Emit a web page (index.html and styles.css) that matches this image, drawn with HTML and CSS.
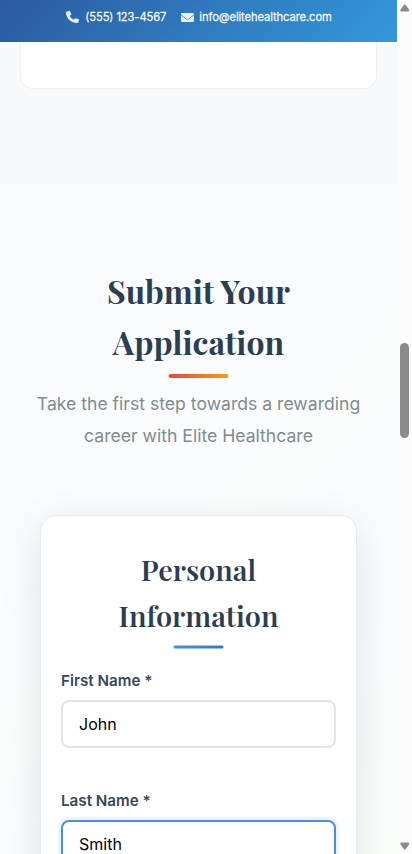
FILE: index.html
```html
<!DOCTYPE html>
<html lang="en">
<head>
<meta charset="utf-8">
<meta name="viewport" content="width=device-width, initial-scale=1">
<title>Elite Healthcare – Careers</title>
<link rel="stylesheet" href="styles.css">
</head>
<body>
<div class="window">
  <div class="page">
    <header class="topbar">
      <span class="contact phone">
        <svg viewBox="0 0 512 512" width="13" height="12" preserveAspectRatio="none"><path fill="currentColor" d="M164.900 24.600c-7.700-18.600-28-28.500-47.400-23.200l-88 24C12.100 30.200 0 46 0 64c0 247.400 200.600 448 448 448 18 0 33.800-12.100 38.600-29.500l24-88c5.300-19.400-4.600-39.700-23.200-47.400l-96-40c-16.300-6.800-35.200-2.100-46.300 11.600L304.700 368C234.300 334.700 177.300 277.700 144 207.300L193.300 167c13.700-11.200 18.400-30 11.600-46.300l-40-96z"/></svg>
        <span>(555) 123-4567</span>
      </span>
      <span class="contact mail">
        <svg viewBox="0 0 13 9" width="13" height="9"><path fill="currentColor" d="M1 0H12Q13 0 13 1V1.500L7.300 5.900Q6.500 6.500 5.700 5.900L0 1.500V1Q0 0 1 0ZM0 2.200L5.400 6.400Q6.500 7.200 7.600 6.400L13 2.200V8Q13 9 12 9H1Q0 9 0 8Z"/></svg>
        <span>info@elitehealthcare.com</span>
      </span>
    </header>
    <section class="previous"><div class="previous-card"></div></section>
    <main class="apply">
      <h2>Submit Your Application</h2>
      <p class="lead">Take the first step towards a rewarding career with Elite Healthcare</p>
      <form class="form-card">
        <h3>Personal Information</h3>
        <div class="field"><label for="first">First Name *</label><input id="first" type="text" value="John"></div>
        <div class="field"><label for="last">Last Name *</label><input id="last" class="active" type="text" value="Smith"></div>
      </form>
    </main>
  </div>
  <div class="scrollbar">
    <svg width="10" height="8" viewBox="0 0 10 8"><path fill="#8b8b8b" d="M4 .8Q4.800 0 5.600.8L9 5.500Q9.500 7.500 8.500 7.500H1Q0 7.500.5 5.500Z"/></svg>
    <div class="thumb"></div>
    <svg class="down" width="10" height="8" viewBox="0 0 10 8"><path fill="#8b8b8b" d="M4 7.200Q4.800 8 5.600 7.200L9 2.500Q9.500.5 8.500.5H1Q0 .5.500 2.500Z"/></svg>
  </div>
</div>
</body>
</html>
```
FILE: styles.css
```css
* { box-sizing: border-box; }
body { margin: 0; font-family: Inter, "Liberation Sans", sans-serif; overflow: hidden; }
.window { display: flex; height: 854px; overflow: hidden; background: #fff; }
.page { width: 397px; height: 854px; overflow: hidden; display: flex; flex-direction: column; }
.topbar {
  height: 42px; flex: none; display: flex; align-items: flex-start; justify-content: center; gap: 15px;
  padding: 8px 0 0 1px; color: rgba(255, 255, 255, .95);
  background: linear-gradient(135deg, #2c5aa0 0%, #3498db 100%);
  font-size: 11.2px; font-weight: 400; line-height: 18px; letter-spacing: -.1px;
  -webkit-text-stroke: .3px rgba(255, 255, 255, .9);
}
.contact { display: flex; align-items: center; gap: 5px; white-space: nowrap; }
.contact svg { display: block; opacity: .93; }
.phone { gap: 6px; }
.previous { height: 141px; flex: none; padding: 0 20px; background: #f8f9fb; }
.previous-card { height: 47.4px; background: #fff; border: 1px solid #edf1f8; border-top: 0; border-radius: 0 0 13px 13px; }
.apply {
  height: 1100px; flex: none; padding: 82px 20px 0;
  background: linear-gradient(135deg, #fafbfd 0%, #fafbfc 20%, #fbfcfc 38%, #f9fbfd 52%, #fbfdfb 70%, #fafbfd 100%);
}
h2, h3 { margin: 0; font-family: "Playfair Display", "Liberation Serif", serif; color: #2c3e50; text-align: center; }
h2 { padding: 0 60px; font-size: 32px; line-height: 51px; font-weight: 700; }
h2::after { content: ""; display: block; width: 60px; height: 4px; margin: 7px 0 0 calc(50% - 30.2px); border-radius: 2px; background: linear-gradient(90deg, #e74c3c, #f39c12); transform: translateX(.5px); }
.lead { margin: 10px 0 0; text-align: center; color: #7f8c8d; font-size: 17.6px; line-height: 32px; }
.form-card {
  height: 700px; margin: 63px 20px 0; padding: 30px 20px 0; background: #fff;
  border: 1px solid #e6ecf4; border-radius: 16px; box-shadow: 0 10px 40px rgba(0, 0, 0, .1);
}
h3 { padding: 0 40px; font-size: 28.8px; line-height: 46px; font-weight: 600; }
h3::after { content: ""; display: block; width: 50px; height: 3px; margin: 7.4px 0 0 calc(50% - 25.2px); border-radius: 2px; background: linear-gradient(90deg, #4a90e2, #357abd); transform: translate(.5px, .5px); }
.field { height: 120px; }
h3 + .field { margin-top: 20.6px; }
label { display: block; color: #34495e; font-size: 15.2px; line-height: 24px; font-weight: 600; }
input {
  display: block; width: 275px; height: 47.5px; margin: 7.5px 0 0; padding: 0 16px; outline: 0;
  border: 2px solid #e1e8ed; border-radius: 8px; background: #fff; color: #000;
  font: 400 16px Inter, sans-serif;
}
input.active { border-color: #4a90e2; box-shadow: 0 0 0 3px rgba(74, 144, 226, .1); }
.scrollbar { width: 15px; height: 854px; padding: 4px 0 4px 3px; background: #fcfcfc; display: flex; flex-direction: column; }
.scrollbar svg { flex: none; margin-left: -.5px; }
.thumb { width: 9px; height: 95px; margin-top: 331.4px; border-radius: 5px; background: #8b8b8b; }
.scrollbar .down { margin-top: auto; }
```
